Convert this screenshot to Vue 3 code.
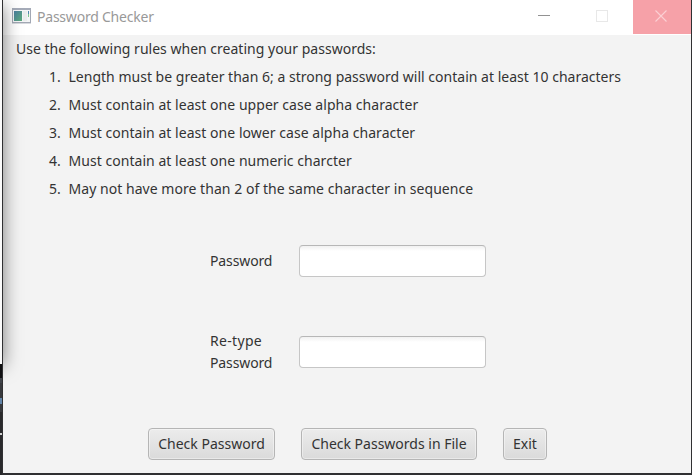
<script setup>
const rules = [
  'Length must be greater than 6; a strong password will contain at least 10 characters',
  'Must contain at least one upper case alpha character',
  'Must contain at least one lower case alpha character',
  'Must contain at least one numeric charcter',
  'May not have more than 2 of the same character in sequence',
]
</script>

<template>
  <div class="desktop">
    <div class="behind"><i class="glyph"></i><i class="rule"></i></div>
    <main class="window">
      <header class="titlebar">
        <svg class="app-icon" width="19" height="16" viewBox="0 0 19 16">
          <defs>
            <linearGradient id="pane" x1="0" y1="0" x2="1" y2="1">
              <stop offset="0" stop-color="#4a7fa0" /><stop offset="1" stop-color="#5dac7c" />
            </linearGradient>
          </defs>
          <rect x="0.5" y="0.5" width="18" height="14" fill="#f4f5f6" stroke="#a2a8b4" />
          <path d="M0 1H19" stroke="#a5abb8" stroke-width="2" />
          <rect x="2" y="3" width="8" height="10" fill="url(#pane)" />
          <rect x="11" y="3" width="4" height="10" fill="#e9ecec" />
          <path d="M16.5 3V6" stroke="#5287b0" /><path d="M16.5 6V9" stroke="#7fc690" />
          <path d="M0 15.5H19" stroke="#d7d9de" />
        </svg>
        <h1>Password Checker</h1>
        <div class="controls">
          <button class="control"><svg width="12" height="12"><path d="M0 5.5H12" stroke="#929292" /></svg></button>
          <button class="control"><svg width="12" height="12"><rect x="0.5" y="0.5" width="11" height="11" fill="none" stroke="#e8e8e8" /></svg></button>
          <button class="control close"><svg width="12" height="12"><path d="M0.5 0.5L11.5 11.5M11.5 0.5L0.5 11.5" stroke="#fbd0d4" stroke-width="1.1" /></svg></button>
        </div>
      </header>
      <section class="content">
        <p class="intro">Use the following rules when creating your passwords:</p>
        <ol>
          <li v-for="(rule, i) in rules" :key="i"><span class="num">{{ i + 1 }}.</span><span>{{ rule }}</span></li>
        </ol>
        <form class="fields" @submit.prevent>
          <label for="password">Password</label>
          <input id="password" type="password" />
          <label for="retype"><span class="first-line">Re-type</span><br />Password</label>
          <input id="retype" type="password" />
        </form>
        <div class="actions">
          <button class="check">Check Password</button>
          <button class="file">Check Passwords in File</button>
          <button class="exit">Exit</button>
        </div>
      </section>
      <div class="shade"></div>
    </main>
  </div>
</template>

<style>
body { margin: 0; overflow: hidden; }
</style>

<style scoped>
* { box-sizing: border-box; }
.desktop {
  width: 692px;
  height: 475px;
  display: flex;
  background: #303032;
  font-family: "Noto Sans", "Open Sans", sans-serif;
  font-size: 14px;
  color: #333;
}
.behind {
  width: 2px;
  margin-right: 1px;
  background: linear-gradient(#fbfbfb 364px, #101012 364px 378px, #41444a 378px 383px, #38393d 383px 412px, #29292b 412px);
}
.glyph { display: block; width: 2px; height: 6px; margin-top: 398px; background: #6284a8; }
.rule { display: block; height: 2px; margin-top: 29px; background: #d0d0d0; }
.window { position: relative; width: 688px; height: 473px; background: #f3f3f3; overflow: hidden; }
.titlebar { height: 35px; display: flex; align-items: flex-start; background: #fff; }
.app-icon { margin: 8px 0 0 9px; }
h1 {
  margin: 6px 0 0 6px;
  font-size: 14px;
  line-height: 22px;
  font-weight: 400;
  letter-spacing: -0.22px;
  color: #999;
  white-space: nowrap;
}
.controls { margin-left: auto; display: flex; }
.control {
  width: 58px;
  height: 34px;
  padding: 0 4px 2px 0;
  border: 0;
  background: transparent;
  display: flex;
  align-items: center;
  justify-content: center;
}
.control.close { background: #f6a1a8; padding-right: 2px; }
.content { padding: 3px 0 0 13px; }
.intro { margin: 0; line-height: 22px; letter-spacing: 0.01px; white-space: nowrap; }
ol { margin: 3px 0 0; padding: 0 0 0 33px; list-style: none; }
li { display: flex; height: 28px; line-height: 28px; letter-spacing: 0.04px; white-space: nowrap; }
li:first-child { letter-spacing: 0.01px; }
.num { width: 19.5px; flex: none; }
.fields {
  margin: 42px 0 0 194px;
  display: grid;
  grid-template-columns: 89px 187px;
  grid-template-rows: 32px 44px;
  row-gap: 53px;
  align-items: center;
  line-height: 22px;
  letter-spacing: -0.12px;
}
.first-line { letter-spacing: 0.32px; }
input {
  width: 187px;
  height: 32px;
  margin: 0;
  border: 1px solid #c6c6c6;
  border-top-color: #b7b7b7;
  border-radius: 4px;
  background: linear-gradient(#f1f1f1, #fff 5px);
  outline: 0;
}
.actions { margin: 54px 0 0 132px; display: flex; gap: 26px; }
.actions button {
  height: 32px;
  padding: 0;
  border: 1px solid #b5b5b5;
  border-radius: 4px;
  background: linear-gradient(#ececec, #dadada);
  box-shadow: inset 0 0 0 1px rgba(255, 255, 255, 0.4);
  font: inherit;
  line-height: 28px;
  letter-spacing: 0;
  color: #333;
  white-space: nowrap;
}
.check { width: 127px; }
.file { width: 176px; }
.exit { width: 44px; }
.shade {
  position: absolute;
  left: -20px;
  top: 5px;
  width: 20px;
  height: 361px;
  box-shadow: 0 0 18px rgba(0, 0, 0, 0.5);
  pointer-events: none;
}
</style>
